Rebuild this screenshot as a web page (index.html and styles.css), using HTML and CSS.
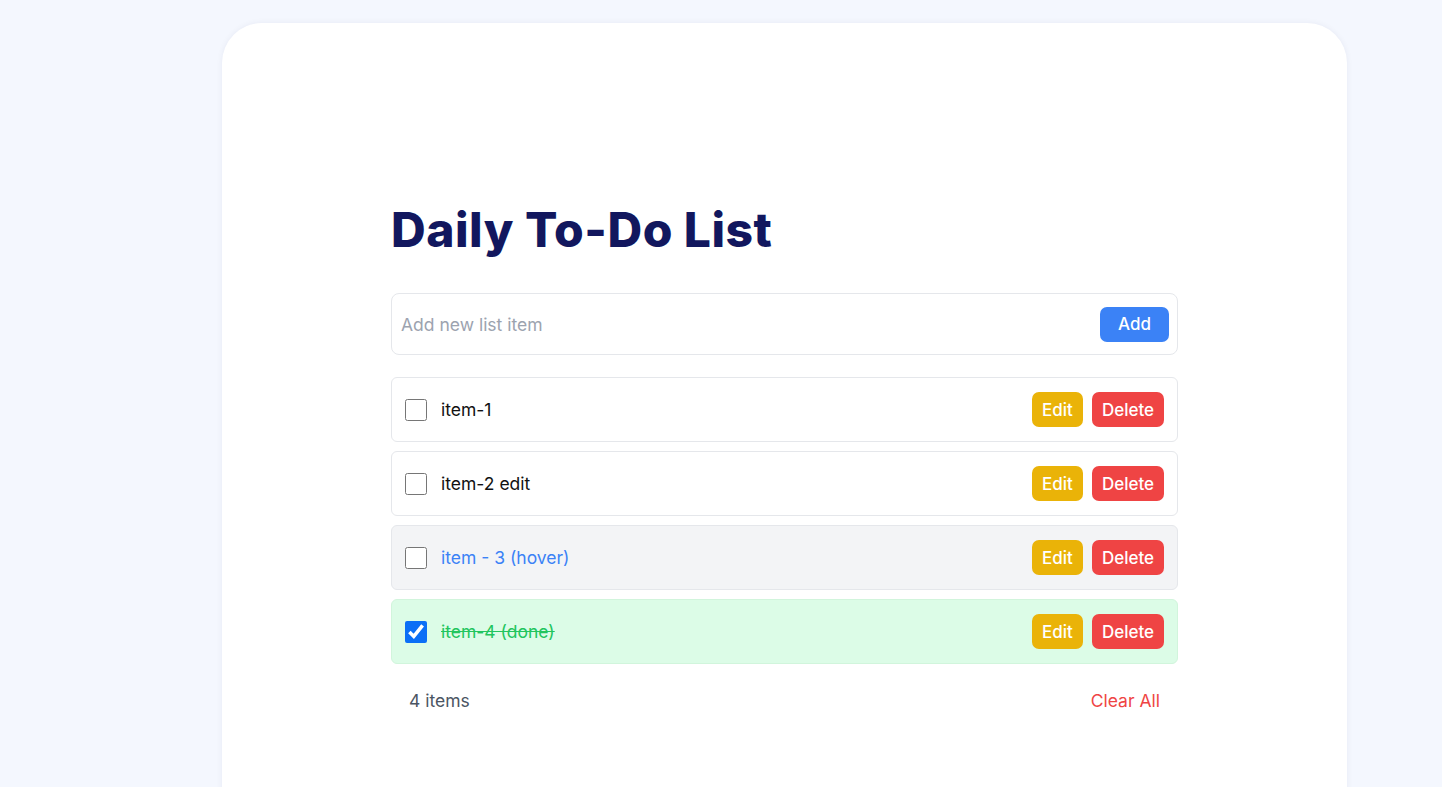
FILE: index.html
```html
<!DOCTYPE html>
<html lang="en">
<head>
<meta charset="utf-8">
<title>Daily To-Do List</title>
<link rel="stylesheet" href="styles.css">
</head>
<body>
<main class="card">
  <div class="content">
    <h1 class="title">Daily To-Do List</h1>
    <form class="add-form" onsubmit="return false">
      <input class="add-input" type="text" placeholder="Add new list item">
      <button class="btn btn-add" type="submit">Add</button>
    </form>
    <ul class="list">
      <li class="item">
        <input class="check" type="checkbox">
        <span class="label">item-1</span>
        <button class="btn btn-edit">Edit</button>
        <button class="btn btn-delete">Delete</button>
      </li>
      <li class="item">
        <input class="check" type="checkbox">
        <span class="label">item-2 edit</span>
        <button class="btn btn-edit">Edit</button>
        <button class="btn btn-delete">Delete</button>
      </li>
      <li class="item item-hover">
        <input class="check" type="checkbox">
        <span class="label">item - 3 (hover)</span>
        <button class="btn btn-edit">Edit</button>
        <button class="btn btn-delete">Delete</button>
      </li>
      <li class="item item-done">
        <input class="check" type="checkbox" checked>
        <span class="label">item-4 (done)</span>
        <button class="btn btn-edit">Edit</button>
        <button class="btn btn-delete">Delete</button>
      </li>
    </ul>
    <div class="footer">
      <span class="count">4 items</span>
      <button class="clear">Clear All</button>
    </div>
  </div>
</main>
</body>
</html>
```

FILE: styles.css
```css
* { box-sizing: border-box; }
html, body { height: 100%; }
body {
  margin: 0;
  background: #f4f7fe;
  font-family: "Inter", "Noto Sans", sans-serif;
  overflow: hidden;
}
.card {
  width: 1125px;
  margin: 23px 0 0 222px;
  min-height: 900px;
  background: #ffffff;
  border-radius: 40px;
  box-shadow: 0 0 6px rgba(30, 40, 90, 0.06);
  padding-top: 178px;
}
.content {
  width: 787px;
  margin: 0 auto;
}
.title {
  margin: 0 0 34px 0;
  font-size: 48px;
  line-height: 58px;
  font-weight: 800;
  color: #12175e;
  letter-spacing: 0.5px;
}
.add-form {
  display: flex;
  align-items: center;
  height: 62px;
  border: 1px solid #e5e7eb;
  border-radius: 8px;
  padding: 0 8px 0 9px;
}
.add-input {
  flex: 1;
  border: none;
  outline: none;
  font: inherit;
  font-size: 17.5px;
  color: #111;
  padding: 0;
}
.add-input::placeholder { color: #9ca3af; }
.btn {
  border: none;
  font: inherit;
  font-size: 17px;
  font-weight: 500;
  color: #fff;
  height: 35px;
  border-radius: 7px;
  padding: 0;
  cursor: pointer;
}
.btn-add { background: #3b82f6; width: 69px; }
.list {
  list-style: none;
  margin: 22px 0 0 0;
  padding: 0;
  display: flex;
  flex-direction: column;
  gap: 9px;
}
.item {
  display: flex;
  align-items: center;
  height: 65px;
  border: 1px solid #e5e7eb;
  border-radius: 6px;
  padding: 0 13px 0 13px;
  background: #fff;
}
.check {
  width: 22px;
  height: 22px;
  margin: 0 14px 0 0;
  accent-color: #0b6ff6;
}
.label {
  flex: 1;
  font-size: 17.5px;
  color: #111;
}
.btn-edit { background: #eab308; width: 51px; margin-right: 9px; }
.btn-delete { background: #ef4444; width: 72px; }
.item-hover { background: #f3f4f6; }
.item-hover .label { color: #3b82f6; }
.item-done { background: #dcfce7; border-color: #d1f5dc; }
.item-done .label { color: #22c55e; text-decoration: line-through; }
.footer {
  display: flex;
  justify-content: space-between;
  align-items: center;
  padding: 0 18px;
  margin-top: 24px;
  height: 24px;
}
.count { font-size: 17.5px; color: #4b5563; }
.clear {
  border: none;
  background: none;
  padding: 0;
  font: inherit;
  font-size: 17.5px;
  color: #ef4444;
  cursor: pointer;
}
```
